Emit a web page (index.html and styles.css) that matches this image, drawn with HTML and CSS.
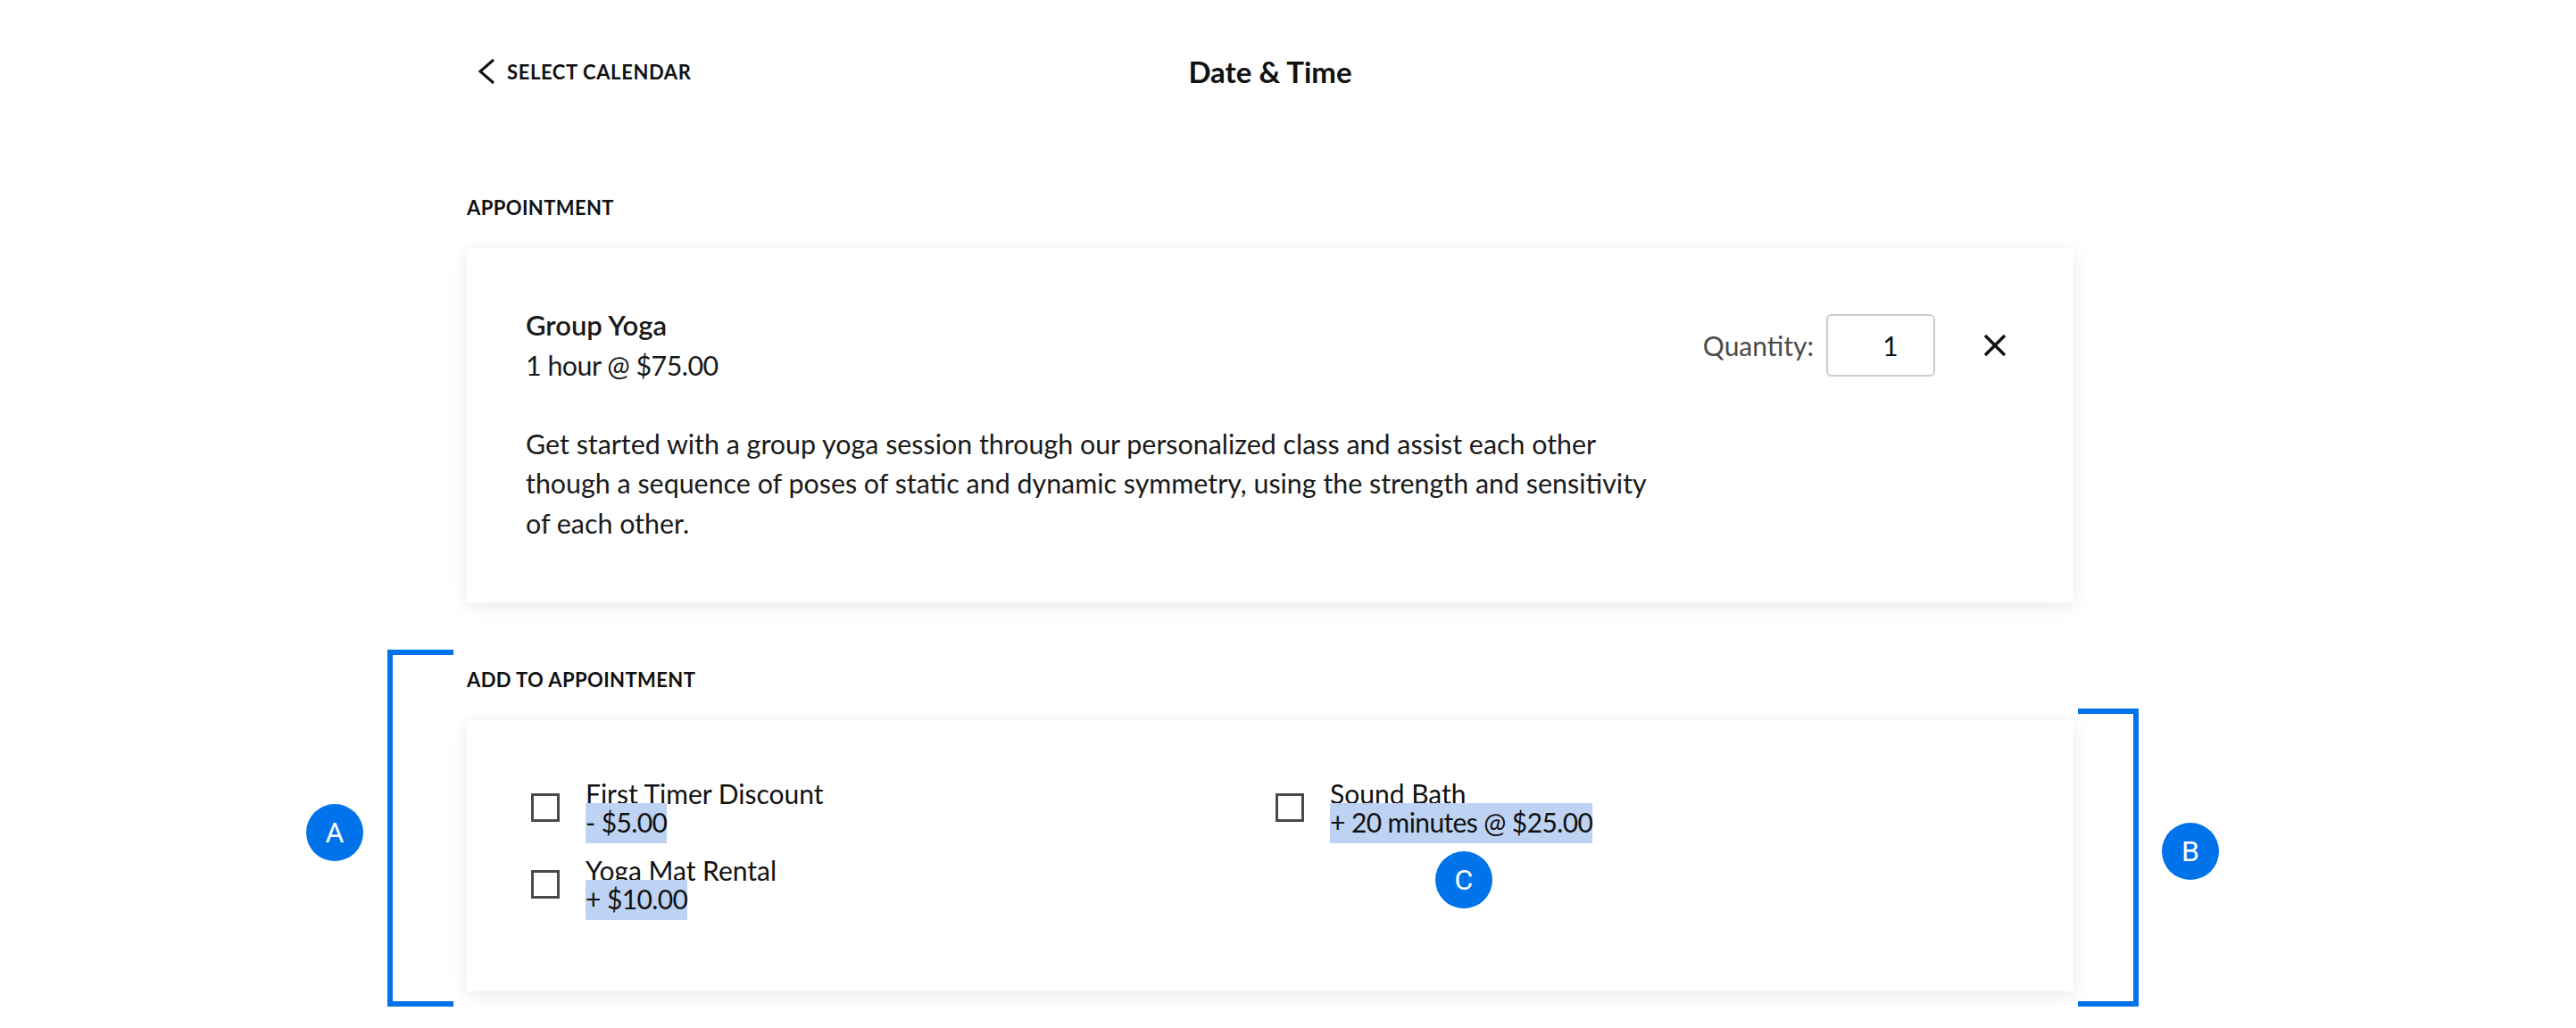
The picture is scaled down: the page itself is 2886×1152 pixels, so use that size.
FILE: index.html
```html
<!DOCTYPE html>
<html lang="en">
<head>
  <meta charset="UTF-8" />
  <meta name="viewport" content="width=device-width, initial-scale=1.0"/>
  <title>Date &amp; Time</title>
  <link rel="stylesheet" href="styles.css">
</head>
<body>
  <div class="page">
    <header class="topbar">
      <a class="back" href="#">
        <svg width="20" height="30" viewBox="0 0 20 30"><polyline points="18,2 3,15 18,28" fill="none" stroke="#111" stroke-width="3"/></svg>
        <span>SELECT CALENDAR</span>
      </a>
      <h1>Date &amp; Time</h1>
      <div></div>
    </header>

    <section class="block">
      <h3 class="label">APPOINTMENT</h3>
      <div class="card appt">
        <div class="appt-info">
          <div class="appt-name">Group Yoga</div>
          <div class="appt-price">1 hour @ $75.00</div>
          <p class="appt-desc">Get started with a group yoga session through our personalized class and assist each other though a sequence of poses of static and dynamic symmetry, using the strength and sensitivity of each other.</p>
        </div>
        <div class="qty">
          <label for="qty">Quantity:</label>
          <input type="text" id="qty" value="1">
          <button class="remove" aria-label="Remove">
            <svg width="26" height="26" viewBox="0 0 26 26"><path d="M2 2 L24 24 M24 2 L2 24" stroke="#111" stroke-width="3.5"/></svg>
          </button>
        </div>
      </div>
    </section>

    <section class="block addons-block">
      <h3 class="label">ADD TO APPOINTMENT</h3>
      <div class="card addons">
        <label class="addon">
          <span class="box"></span>
          <span class="addon-text">First Timer Discount<br><span class="hl">- $5.00</span></span>
        </label>
        <label class="addon">
          <span class="box"></span>
          <span class="addon-text">Sound Bath<br><span class="hl">+ 20 minutes @ $25.00</span></span>
        </label>
        <label class="addon">
          <span class="box"></span>
          <span class="addon-text">Yoga Mat Rental<br><span class="hl">+ $10.00</span></span>
        </label>

        <!-- annotations -->
        <div class="bracket bracket-left"></div>
        <div class="bracket bracket-right"></div>
        <div class="marker marker-a">A</div>
        <div class="marker marker-b">B</div>
        <div class="marker marker-c">C</div>
      </div>
    </section>
  </div>
</body>
</html>
```

FILE: styles.css
```css
body {
  margin: 0;
  background: #fff;
  color: #1a1a1a;
  font-family: Lato, "Noto Sans", sans-serif;
}
.page {
  width: 1800px;
  margin-left: 523px;
  padding-bottom: 60px;
}
.topbar {
  display: grid;
  grid-template-columns: 1fr auto 1fr;
  align-items: center;
  height: 160px;
}
.back {
  display: flex;
  align-items: center;
  gap: 13px;
  margin-left: 12px;
  color: #111;
  text-decoration: none;
  font-size: 22px;
  font-weight: 700;
  letter-spacing: 0.6px;
}
.topbar h1 {
  margin: 0;
  font-size: 33px;
  font-weight: 700;
  color: #111;
}
.label {
  margin: 58px 0 30px;
  font-size: 22px;
  line-height: 30px;
  font-weight: 700;
  letter-spacing: 0.4px;
  color: #111;
}
.addons-block .label {
  margin-top: 72px;
}
.card {
  background: #fff;
  box-shadow: 0 4px 20px rgba(0, 0, 0, 0.09);
}
.appt {
  display: flex;
  justify-content: space-between;
  align-items: flex-start;
  padding: 64px 68px 66px 66px;
}
.appt-info {
  max-width: 1270px;
  font-size: 30.4px;
  line-height: 44.8px;
}
.appt-name {
  font-size: 31px;
  font-weight: 600;
}
.appt-price {
  letter-spacing: -0.5px;
}
.appt-desc {
  margin: 43px 0 0;
}
.qty {
  display: flex;
  align-items: center;
  gap: 14px;
  margin-top: 10px;
  font-size: 30px;
  color: #4a4a4a;
}
.qty input {
  width: 122px;
  height: 70px;
  box-sizing: border-box;
  border: 2px solid #ccc;
  border-radius: 6px;
  padding: 0 0 0 22px;
  font-family: inherit;
  font-size: 30px;
  text-align: center;
  color: #111;
}
.remove {
  width: 40px;
  height: 40px;
  margin-left: 33px;
  padding: 0;
  border: none;
  background: none;
  display: flex;
  align-items: center;
  justify-content: center;
}
.addons {
  position: relative;
  display: grid;
  grid-template-columns: 1fr 1fr;
  column-gap: 12px;
  row-gap: 22px;
  padding: 66px 72px 88px;
}
.addon {
  display: flex;
  align-items: center;
  gap: 29px;
  font-size: 30px;
  line-height: 32px;
  color: #111;
}
.box {
  width: 32px;
  height: 32px;
  box-sizing: border-box;
  border: 3px solid #4a4a4a;
  flex: none;
}
.hl {
  background: #bed3f3;
  padding: 3px 0 6px;
  letter-spacing: -0.6px;
}
.bracket {
  position: absolute;
  border: 6px solid #0073ea;
  box-sizing: border-box;
}
.bracket-left {
  left: -89px;
  top: -79px;
  width: 74px;
  height: 400px;
  border-right: none;
}
.bracket-right {
  left: 1805px;
  top: -13px;
  width: 68px;
  height: 334px;
  border-left: none;
}
.marker {
  position: absolute;
  width: 64px;
  height: 64px;
  border-radius: 50%;
  background: #0073ea;
  color: #fff;
  font-family: Roboto, sans-serif;
  font-size: 32px;
  line-height: 64px;
  text-align: center;
}
.marker-a { left: -180px; top: 94px; }
.marker-b { left: 1899px; top: 115px; }
.marker-c { left: 1085px; top: 147px; }
```
